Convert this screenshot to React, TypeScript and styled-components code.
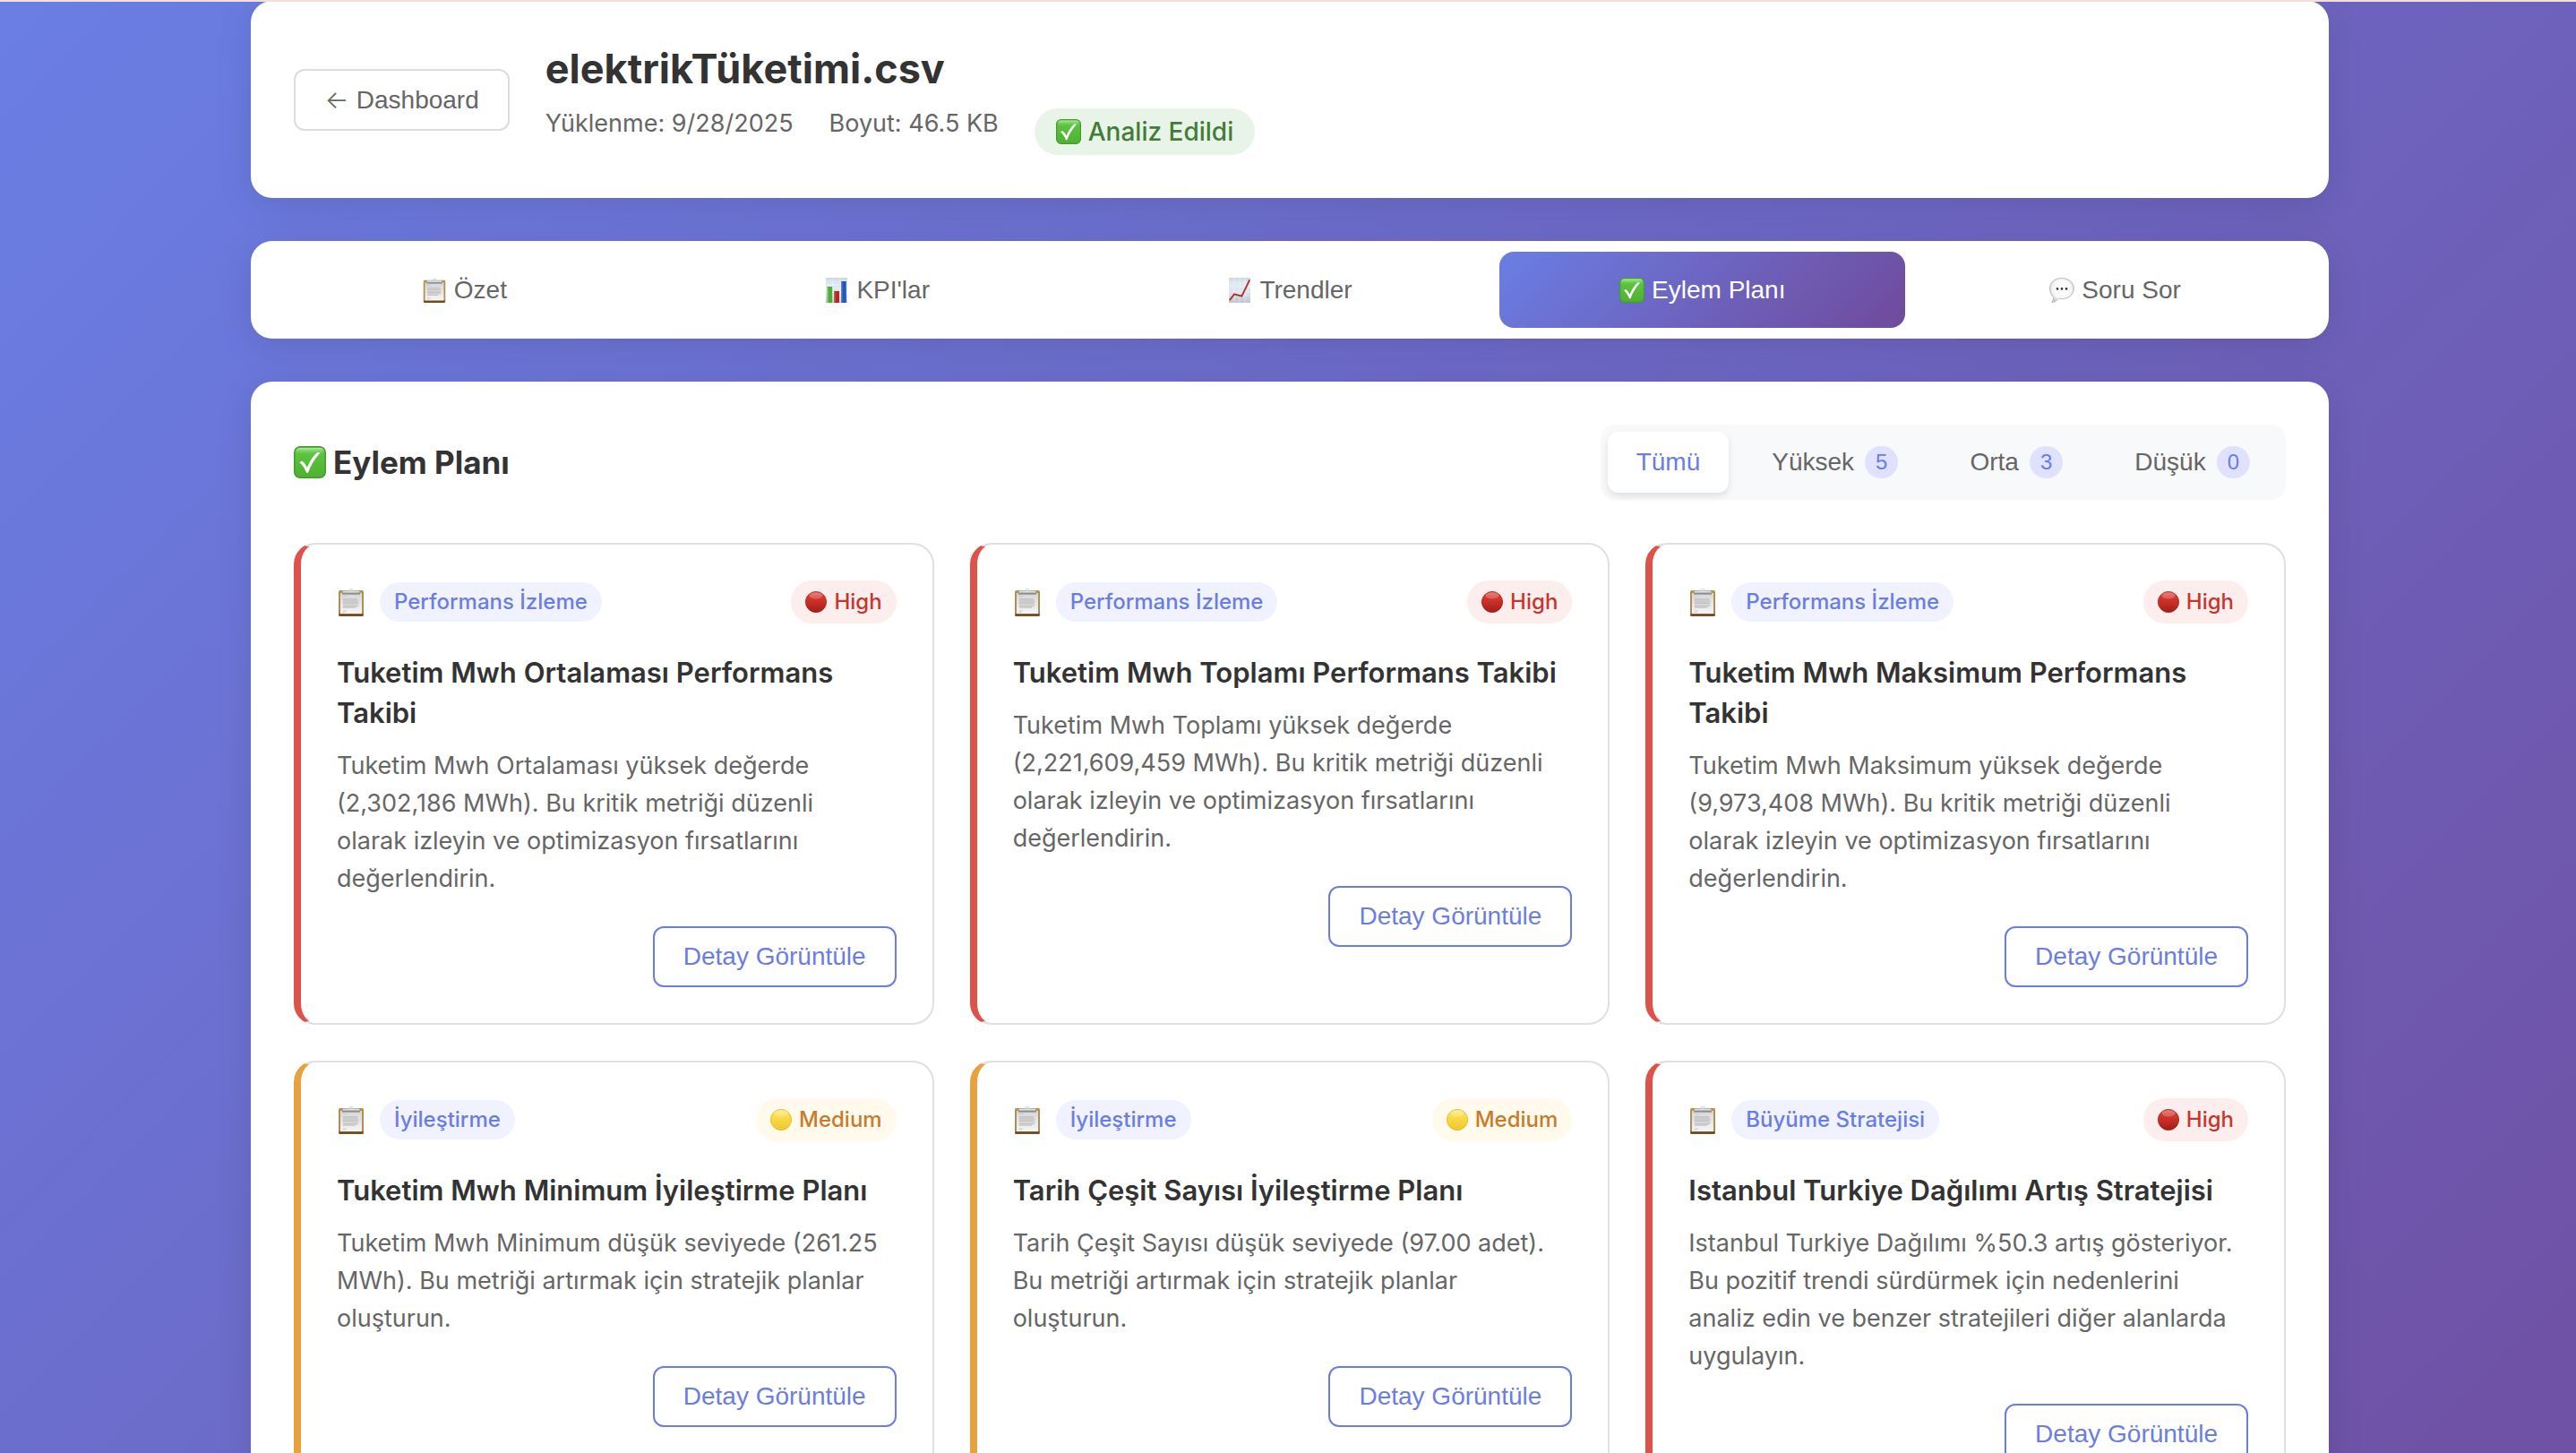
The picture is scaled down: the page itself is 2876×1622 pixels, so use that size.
import React, { useState } from "react";
import styled, { createGlobalStyle, css } from "styled-components";

const uiFont = `Inter, "Noto Sans", sans-serif`;
const controlFont = `"Liberation Sans", Arial, sans-serif`;

const color = {
  accent: "#6a7de3",
  heading: "#333333",
  text: "#666666",
  line: "#e0e0e0",
  white: "#ffffff",
};

const GlobalStyle = createGlobalStyle`
  *, *::before, *::after { box-sizing: border-box; }
  body { margin: 0; font-family: ${uiFont}; color: ${color.heading}; }
  h1, h2, h3, p { margin: 0; }
  button { font-family: ${controlFont}; cursor: pointer; }
`;

const Page = styled.div`
  height: 100vh;
  overflow: hidden;
  padding: 1px 0 0 4px;
  background: linear-gradient(135deg, #6a7ee4 0%, #704b9c 100%) 0 0 / 100% 135% no-repeat;
`;

const TopLine = styled.div`
  position: absolute;
  inset: 0 0 auto 0;
  height: 2px;
  background: #f2dfdb;
`;

const Container = styled.div`
  max-width: 2400px;
  margin: 0 auto;
  padding: 0 40px;
  display: flex;
  flex-direction: column;
  gap: 48px;
`;

const panel = css`
  background: ${color.white};
  border-radius: 24px;
  box-shadow: 0 8px 40px rgba(0, 0, 0, 0.1);
`;

const Header = styled.header`
  ${panel}
  padding: 48px;
  display: flex;
  align-items: center;
  gap: 40px;
`;

const OutlineButton = styled.button<{ $accent?: boolean }>`
  padding: 16px 32px;
  border: 2px solid ${(p) => (p.$accent ? color.accent : "#dddddd")};
  border-radius: 12px;
  background: ${color.white};
  color: ${(p) => (p.$accent ? color.accent : color.text)};
  font-size: 28px;
  line-height: 32px;
`;

const Arrow = styled.span`
  display: inline-block;
  width: 28px;
  font-family: Inter, sans-serif;
  font-weight: 300;
`;

const FileInfo = styled.div`
  display: flex;
  flex-direction: column;
  gap: 16px;
`;

const FileName = styled.h1`
  font-size: 45px;
  line-height: 56px;
  font-weight: 700;
`;

const Meta = styled.div`
  display: flex;
  align-items: flex-start;
  gap: 40px;
  color: ${color.text};
  font-size: 27px;
  line-height: 34px;
`;

const StatusBadge = styled.span`
  display: flex;
  align-items: center;
  gap: 8px;
  padding: 8px 24px;
  border-radius: 26px;
  background: #e9f4e9;
  color: #437b38;
  font-size: 28px;
  font-weight: 500;
  line-height: 36px;
`;

const Tabs = styled.nav`
  ${panel}
  padding: 12px;
  display: flex;
  gap: 8px;
`;

const Tab = styled.button<{ $active: boolean }>`
  flex: 1;
  display: flex;
  align-items: center;
  justify-content: center;
  gap: 8px;
  padding: 24px 32px;
  border: 0;
  border-radius: 16px;
  background: ${(p) => (p.$active ? "linear-gradient(135deg, #6a7ee4 0%, #704a9b 100%)" : "transparent")};
  color: ${(p) => (p.$active ? color.white : color.text)};
  font-size: 28px;
  line-height: 37px;
`;

const Content = styled.main`
  ${panel}
  padding: 48px;
`;

const ContentHead = styled.div`
  display: flex;
  align-items: center;
  justify-content: space-between;
  margin-bottom: 48px;
`;

const SectionTitle = styled.h2`
  display: flex;
  align-items: center;
  gap: 8px;
  font-size: 35px;
  line-height: 44px;
  font-weight: 700;
`;

const Filters = styled.div`
  display: flex;
  gap: 16px;
  padding: 8px;
  border-radius: 16px;
  background: #f8f9fb;
`;

const Filter = styled.button<{ $active: boolean }>`
  display: flex;
  align-items: center;
  gap: 12px;
  padding: 16px 32px;
  border: 0;
  border-radius: 12px;
  background: ${(p) => (p.$active ? color.white : "transparent")};
  box-shadow: ${(p) => (p.$active ? "0 4px 8px rgba(0, 0, 0, 0.1)" : "none")};
  color: ${(p) => (p.$active ? color.accent : color.text)};
  font-size: 28px;
  line-height: 36px;
`;

const Count = styled.span`
  padding: 0 12px;
  border-radius: 20px;
  background: #e0e1ff;
  color: ${color.accent};
  font-size: 24px;
  line-height: 36px;
`;

const CardGrid = styled.div`
  display: grid;
  grid-template-columns: repeat(3, minmax(0, 1fr));
  gap: 40px;
`;

type Priority = "High" | "Medium";

const tone: Record<Priority, { edge: string; text: string; back: string }> = {
  High: { edge: "#de524c", text: "#c5372e", back: "#fdeeee" },
  Medium: { edge: "#e8a23d", text: "#c87a2e", back: "#fffaeb" },
};

const Card = styled.article<{ $priority: Priority }>`
  display: flex;
  flex-direction: column;
  align-items: stretch;
  padding: 40px;
  border: 2px solid ${color.line};
  border-left: 8px solid ${(p) => tone[p.$priority].edge};
  border-radius: 24px;
  background: ${color.white};
`;

const CardHead = styled.div`
  display: flex;
  align-items: center;
  justify-content: space-between;
  margin-bottom: 32px;
`;

const CategoryGroup = styled.div`
  display: flex;
  align-items: center;
  gap: 16px;
`;

const Category = styled.span`
  padding: 4px 16px;
  border-radius: 22px;
  background: #f0f2ff;
  color: ${color.accent};
  font-size: 24px;
  line-height: 36px;
  font-weight: 500;
`;

const PriorityBadge = styled.span<{ $priority: Priority }>`
  display: flex;
  align-items: center;
  gap: 8px;
  padding: 6px 16px;
  border-radius: 24px;
  background: ${(p) => tone[p.$priority].back};
  color: ${(p) => tone[p.$priority].text};
  font-size: 24px;
  line-height: 36px;
  font-weight: 500;
`;

const CardTitle = styled.h3`
  margin-bottom: 16px;
  font-size: 31px;
  line-height: 45px;
  font-weight: 600;
`;

const CardText = styled.p`
  margin-bottom: 32px;
  padding-right: 12px;
  color: ${color.text};
  font-size: 27px;
  line-height: 42px;
`;

const CardActions = styled.div`
  display: flex;
  justify-content: flex-end;
`;

const Icon = styled.svg<{ $size: number }>`
  display: block;
  flex: none;
  width: ${(p) => p.$size}px;
  height: ${(p) => p.$size}px;
`;

const Defs = styled.svg`
  position: absolute;
  width: 0;
  height: 0;
`;

const GradientDefs = () => (
  <Defs aria-hidden="true">
    <defs>
      <linearGradient id="green" x1="0" y1="0" x2="0" y2="1">
        <stop offset="0" stopColor="#5fc944" />
        <stop offset="1" stopColor="#4fb031" />
      </linearGradient>
      <linearGradient id="gloss" x1="0" y1="0" x2="0" y2="1">
        <stop offset="0" stopColor="#b4e8a4" />
        <stop offset="1" stopColor="#5fc944" stopOpacity="0" />
      </linearGradient>
      <linearGradient id="board" x1="0" y1="0" x2="0" y2="1">
        <stop offset="0" stopColor="#b8914f" />
        <stop offset="0.85" stopColor="#b08a55" />
        <stop offset="1" stopColor="#7c5428" />
      </linearGradient>
      <linearGradient id="paper" x1="0" y1="0" x2="0" y2="1">
        <stop offset="0" stopColor="#d6d6d6" />
        <stop offset="1" stopColor="#f6f6f6" />
      </linearGradient>
      <linearGradient id="clip" x1="0" y1="0" x2="0" y2="1">
        <stop offset="0" stopColor="#d9dfe4" />
        <stop offset="0.6" stopColor="#b9bec2" />
        <stop offset="1" stopColor="#777777" />
      </linearGradient>
      <linearGradient id="sheet" x1="0" y1="0" x2="0" y2="1">
        <stop offset="0" stopColor="#ccd7df" />
        <stop offset="0.25" stopColor="#e0e9f1" />
        <stop offset="0.6" stopColor="#dbe4ec" />
        <stop offset="1" stopColor="#bcc5cd" />
      </linearGradient>
      <linearGradient id="red" x1="0" y1="0" x2="0" y2="1">
        <stop offset="0" stopColor="#e0625a" />
        <stop offset="0.25" stopColor="#d6382f" />
        <stop offset="0.6" stopColor="#c22c23" />
        <stop offset="1" stopColor="#9a1f18" />
      </linearGradient>
      <linearGradient id="yellow" x1="0" y1="0" x2="0" y2="1">
        <stop offset="0" stopColor="#fbe98a" />
        <stop offset="0.3" stopColor="#f9de4a" />
        <stop offset="1" stopColor="#f1c62f" />
      </linearGradient>
      <radialGradient id="bubble" cx="0.5" cy="0.45" r="0.55">
        <stop offset="0" stopColor="#ffffff" />
        <stop offset="0.7" stopColor="#f7f7f7" />
        <stop offset="1" stopColor="#c9c9c9" />
      </radialGradient>
    </defs>
  </Defs>
);

type IconProps = { size: number };

const CheckIcon = ({ size }: IconProps) => (
  <Icon $size={size} viewBox="0 0 36 36" aria-hidden="true">
    <rect x="0.75" y="0.75" width="34.5" height="34.5" rx="6.5" fill="url(#green)" stroke="#459a2c" strokeWidth="1.5" />
    <rect x="2.5" y="2" width="31" height="8" rx="4" fill="url(#gloss)" />
    <path d="M6.5 18.2 9.2 16.6 C11.6 18.5 13.6 21 15 23.8 C17.6 17.2 21.4 11.2 26.4 6.8 L29.6 7.4 C24.2 13.2 19.2 20.6 16 29.8 L14.2 29.8 C12.6 25.4 10 21.4 6.5 18.2 Z" fill="#ffffff" />
  </Icon>
);

const ClipboardIcon = ({ size }: IconProps) => (
  <Icon $size={size} viewBox="0 0 32 32" aria-hidden="true">
    <rect x="2" y="3" width="28" height="29" rx="1.6" fill="url(#board)" />
    <rect x="2.5" y="29.4" width="27" height="2.2" rx="1" fill="#72491f" />
    <rect x="4" y="6" width="24" height="23" fill="url(#paper)" />
    <path d="M6.6 9.6h5M6.6 26h4.6M6.6 27.4h3" stroke="#c6c6c6" strokeWidth="0.8" />
    <path d="M6.8 12.6h16M6.8 14.2h17M6.8 15.8h17.6M6.8 17.4h17M6.8 19h17.6M6.8 20.6h17M6.8 22.2h14" stroke="#c4c4c4" strokeWidth="1.2" />
    <path d="M6 7.4V5.2Q6 3.6 8 3.4H12.6L14 2.4Q14.2 0.4 16 0.4T18 2.4L19.4 3.4H24Q26 3.6 26 5.2V7.4Z" fill="url(#clip)" />
    <circle cx="16" cy="2.2" r="0.9" fill="#ffffff" />
    <path d="M7 4.8h18" stroke="#eef1f3" strokeWidth="1" />
  </Icon>
);

const BarsIcon = ({ size }: IconProps) => (
  <Icon $size={size} viewBox="0 0 28 28" aria-hidden="true">
    <rect x="2" y="0" width="24" height="28" fill="url(#sheet)" />
    <path d="M2 4h24M2 8h24M2 12h24M2 16h24M2 20h24M2 24h24M10 0v28M18 0v28" stroke="#f1f6fa" strokeWidth="0.5" />
    <rect x="3.6" y="10" width="5.6" height="18" fill="#4fae35" />
    <rect x="11.2" y="15" width="5.8" height="13" fill="#b5291f" />
    <rect x="19.2" y="4" width="5.6" height="24" fill="#2257bd" />
    <path d="M4.4 11v17M12 16v12M20 5v23" stroke="#ffffff" strokeOpacity="0.25" strokeWidth="1" />
  </Icon>
);

const TrendIcon = ({ size }: IconProps) => (
  <Icon $size={size} viewBox="0 0 28 28" aria-hidden="true">
    <rect x="2" y="0" width="24" height="28" fill="url(#sheet)" />
    <path d="M2 5h24M2 10h24M2 15h24M2 20h24M8 0v28M14 0v28M20 0v28" stroke="#f1f6fa" strokeWidth="0.5" />
    <path d="M2.8 25.2 8 18.4 16.4 20.6 25.2 2.4" fill="none" stroke="#b5281f" strokeWidth="1.8" strokeLinejoin="round" />
  </Icon>
);

const BubbleIcon = ({ size }: IconProps) => (
  <Icon $size={size} viewBox="0 0 28 28" aria-hidden="true">
    <path
      d="M13.6 0.5C21.4 0.5 27.4 5 27.4 12S21.6 23.6 14 23.6C12.8 23.6 11.6 23.5 10.5 23.2 8.6 25.4 6 27.2 2.8 27.6 2.6 27.2 4.6 25.4 4.8 21.6 1.8 19.4 0.5 16.2 0.5 12 0.5 5 6 0.5 13.6 0.5Z"
      fill="url(#bubble)"
      stroke="#a9a9a9"
      strokeWidth="0.7"
    />
    <circle cx="9" cy="12.4" r="1.3" fill="#333333" />
    <circle cx="14" cy="12.4" r="1.3" fill="#333333" />
    <circle cx="19" cy="12.4" r="1.3" fill="#333333" />
  </Icon>
);

const DotIcon = ({ size, priority }: IconProps & { priority: Priority }) => (
  <Icon $size={size} viewBox="0 0 24 24" aria-hidden="true">
    <circle
      cx="12"
      cy="12"
      r="11.6"
      fill={priority === "High" ? "url(#red)" : "url(#yellow)"}
      stroke={priority === "High" ? "#a3241c" : "#dfb32b"}
      strokeWidth="0.8"
    />
    <ellipse cx="12" cy="5" rx="7.4" ry="3.4" fill="#ffffff" fillOpacity="0.22" />
  </Icon>
);

const tabs = [
  { label: "Özet", icon: ClipboardIcon },
  { label: "KPI'lar", icon: BarsIcon },
  { label: "Trendler", icon: TrendIcon },
  { label: "Eylem Planı", icon: CheckIcon },
  { label: "Soru Sor", icon: BubbleIcon },
];

const filters: { label: string; count?: number }[] = [
  { label: "Tümü" },
  { label: "Yüksek", count: 5 },
  { label: "Orta", count: 3 },
  { label: "Düşük", count: 0 },
];

const actions: { category: string; priority: Priority; title: string; text: string }[] = [
  {
    category: "Performans İzleme",
    priority: "High",
    title: "Tuketim Mwh Ortalaması Performans Takibi",
    text: "Tuketim Mwh Ortalaması yüksek değerde (2,302,186 MWh). Bu kritik metriği düzenli olarak izleyin ve optimizasyon fırsatlarını değerlendirin.",
  },
  {
    category: "Performans İzleme",
    priority: "High",
    title: "Tuketim Mwh Toplamı Performans Takibi",
    text: "Tuketim Mwh Toplamı yüksek değerde (2,221,609,459 MWh). Bu kritik metriği düzenli olarak izleyin ve optimizasyon fırsatlarını değerlendirin.",
  },
  {
    category: "Performans İzleme",
    priority: "High",
    title: "Tuketim Mwh Maksimum Performans Takibi",
    text: "Tuketim Mwh Maksimum yüksek değerde (9,973,408 MWh). Bu kritik metriği düzenli olarak izleyin ve optimizasyon fırsatlarını değerlendirin.",
  },
  {
    category: "İyileştirme",
    priority: "Medium",
    title: "Tuketim Mwh Minimum İyileştirme Planı",
    text: "Tuketim Mwh Minimum düşük seviyede (261.25 MWh). Bu metriği artırmak için stratejik planlar oluşturun.",
  },
  {
    category: "İyileştirme",
    priority: "Medium",
    title: "Tarih Çeşit Sayısı İyileştirme Planı",
    text: "Tarih Çeşit Sayısı düşük seviyede (97.00 adet). Bu metriği artırmak için stratejik planlar oluşturun.",
  },
  {
    category: "Büyüme Stratejisi",
    priority: "High",
    title: "Istanbul Turkiye Dağılımı Artış Stratejisi",
    text: "Istanbul Turkiye Dağılımı %50.3 artış gösteriyor. Bu pozitif trendi sürdürmek için nedenlerini analiz edin ve benzer stratejileri diğer alanlarda uygulayın.",
  },
];

export default function App() {
  const [tab, setTab] = useState("Eylem Planı");
  const [filter, setFilter] = useState("Tümü");

  return (
    <Page>
      <GlobalStyle />
      <GradientDefs />
      <Container>
        <Header>
          <OutlineButton type="button">
            <Arrow>←</Arrow> Dashboard
          </OutlineButton>
          <FileInfo>
            <FileName>elektrikTüketimi.csv</FileName>
            <Meta>
              <span>Yüklenme: 9/28/2025</span>
              <span>Boyut: 46.5 KB</span>
              <StatusBadge>
                <CheckIcon size={28} />
                Analiz Edildi
              </StatusBadge>
            </Meta>
          </FileInfo>
        </Header>

        <Tabs>
          {tabs.map(({ label, icon: TabIcon }) => (
            <Tab key={label} type="button" $active={label === tab} onClick={() => setTab(label)}>
              <TabIcon size={28} />
              {label}
            </Tab>
          ))}
        </Tabs>

        <Content>
          <ContentHead>
            <SectionTitle>
              <CheckIcon size={36} />
              Eylem Planı
            </SectionTitle>
            <Filters>
              {filters.map(({ label, count }) => (
                <Filter key={label} type="button" $active={label === filter} onClick={() => setFilter(label)}>
                  {label}
                  {count !== undefined && <Count>{count}</Count>}
                </Filter>
              ))}
            </Filters>
          </ContentHead>

          <CardGrid>
            {actions.map((action) => (
              <Card key={action.title} $priority={action.priority}>
                <CardHead>
                  <CategoryGroup>
                    <ClipboardIcon size={32} />
                    <Category>{action.category}</Category>
                  </CategoryGroup>
                  <PriorityBadge $priority={action.priority}>
                    <DotIcon size={24} priority={action.priority} />
                    {action.priority}
                  </PriorityBadge>
                </CardHead>
                <CardTitle>{action.title}</CardTitle>
                <CardText>{action.text}</CardText>
                <CardActions>
                  <OutlineButton type="button" $accent>
                    Detay Görüntüle
                  </OutlineButton>
                </CardActions>
              </Card>
            ))}
          </CardGrid>
        </Content>
      </Container>
      <TopLine />
    </Page>
  );
}
